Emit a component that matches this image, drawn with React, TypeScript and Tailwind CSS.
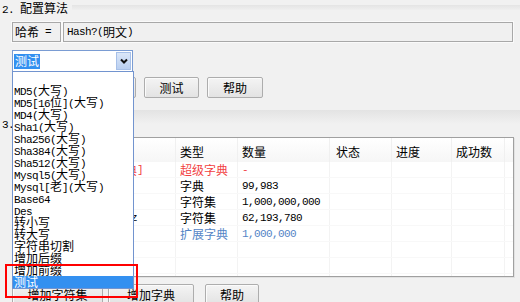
import React from 'react'

const LAT = "font-['Liberation_Mono',monospace] text-[11px] tracking-[-0.6px]"

function Mix({ t }: { t: string }) {
  const parts = t.match(/[\x00-\u02ff]+|[^\x00-\u02ff]+/g) ?? []
  return (
    <>
      {parts.map((p, i) =>
        /[\x00-\u02ff]/.test(p[0]) ? (
          <span key={i} className={LAT}>
            {p}
          </span>
        ) : (
          <span key={i}>{p}</span>
        )
      )}
    </>
  )
}

const Btn = ({ label, w }: { label: string; w: string }) => (
  <div
    className={`${w} h-[21px] shrink-0 flex items-center justify-center rounded-[2px] border border-[#adadad] bg-gradient-to-b from-[#f4f4f4] to-[#e3e3e3] shadow-[inset_1px_1px_0_#fbfbfb]`}
  >
    <Mix t={label} />
  </div>
)

const options = [
  '',
  'MD5(大写)',
  'MD5[16位](大写)',
  'MD4(大写)',
  'Sha1(大写)',
  'Sha256(大写)',
  'Sha384(大写)',
  'Sha512(大写)',
  'Mysql5(大写)',
  'Mysql[老](大写)',
  'Base64',
  'Des',
  '转小写',
  '转大写',
  '字符串切割',
  '增加后缀',
  '增加前缀',
  '测试',
]

const cols = [
  { w: 'w-[68px]', h: '', pl: 'pl-[4px]' },
  { w: 'w-[95px]', h: '', pl: 'pl-[2px]' },
  { w: 'w-[62px]', h: '类型', pl: 'pl-[4px]' },
  { w: 'w-[92px]', h: '数量', pl: 'pl-[4px]' },
  { w: 'w-[62px]', h: '状态', pl: 'pl-[6px]' },
  { w: 'w-[60px]', h: '进度', pl: 'pl-[4px]' },
  { w: 'w-[53px]', h: '成功数', pl: 'pl-[4px]' },
]

const rows = [
  { c: 'text-[#f23f3f]', v: ['1', '[超级字典]', '超级字典', '-'] },
  { c: 'text-black', v: ['2', '', '字典', '99,983'] },
  { c: 'text-black', v: ['3', '', '字符集', '1,000,000,000'] },
  { c: 'text-black', v: ['4', 'A-Z0-9a-z', '字符集', '62,193,780'] },
  { c: 'text-[#5585c6]', v: ['5', '', '扩展字典', '1,000,000'] },
]

export default function App() {
  return (
    <div className="relative w-[520px] h-[302px] overflow-hidden bg-[#f1f1f1] text-black text-[12px] leading-[12px] font-['Noto_Sans_CJK_SC',sans-serif]">
      {/* section 2 title */}
      <div className="flex h-[22px] items-start pt-[2px] pl-[2px]">
        <span className="whitespace-nowrap">
          <Mix t="2." />
          <span className="ml-[6px]">配置算法</span>
        </span>
        <div className="ml-[4px] mt-[3px] h-[5px] flex-1 bg-gradient-to-b from-[#e4e4e4] to-[#efefef]" />
      </div>

      {/* hash row */}
      <div className="flex h-[20px] pl-[12px]">
        <div className="w-[49px] h-[20px] flex items-center pl-[2px] border border-[#a8a8a8] bg-[#f0f0f0] shadow-[0_0_0_1px_#fafafa] whitespace-pre">
          <Mix t="哈希 =" />
        </div>
        <div className="ml-[2px] w-[450px] h-[20px] flex items-center pl-[3px] border border-[#a8a8a8] bg-[#f0f0f0] shadow-[0_0_0_1px_#fafafa]">
          <Mix t="Hash?(明文)" />
        </div>
      </div>

      {/* combobox */}
      <div className="mt-[8px] ml-[12px] w-[121px] h-[22px] flex items-center border border-[#7a9cd3] bg-white">
        <span className="ml-[1px] px-[1px] h-[15px] flex items-center bg-[#3390f0] text-white">测试</span>
        <div className="ml-auto mr-[1px] w-[15px] h-[18px] flex items-center justify-center bg-gradient-to-b from-[#dbe7f8] to-[#b9cff0] border border-[#a7c0e8]">
          <svg width="8" height="6" viewBox="0 0 8 6">
            <path d="M1 1.5 L4 4.5 L7 1.5" fill="none" stroke="#111" strokeWidth="2" />
          </svg>
        </div>
      </div>

      {/* buttons row */}
      <div className="mt-[5px] flex pl-[76px] gap-[8px]">
        <Btn label="选择" w="w-[60px]" />
        <Btn label="测试" w="w-[55px]" />
        <Btn label="帮助" w="w-[56px]" />
      </div>

      {/* section 3 header */}
      <div className="relative h-[39px]">
        <div className="absolute left-[12px] right-0 top-[12px] h-[14px] bg-gradient-to-b from-[#e3e3e3] to-[#f1f1f1]" />
        <div className="absolute left-[2px] top-[19px]">
          <Mix t="3." />
          <span className="ml-[6px]">字典列表</span>
        </div>
      </div>

      {/* table */}
      <div className="ml-[12px] w-[502px] h-[140px] border border-[#a0a0a0] bg-white shadow-[1px_1px_0_#e2e2e2] overflow-hidden">
        <div className="flex h-[24px] bg-gradient-to-b from-[#ffffff] to-[#f6f6f6]">
          {cols.map((c, i) => (
            <div key={i} className={`${c.w} ${c.pl} shrink-0 h-full flex items-center pt-[4px] border-r border-[#f0f0f0]`}>
              {c.h}
            </div>
          ))}
        </div>
        <div className="relative">
          {rows.map((r, ri) => (
            <div key={ri} className={`flex h-[16px] ${r.c} border-b border-[#f8f8f8]`}>
              {cols.map((c, i) => (
                <div key={i} className={`${c.w} ${c.pl} shrink-0 flex items-center whitespace-nowrap border-r border-[#f3f3f3]`}>
                  {r.v[i] ? <Mix t={r.v[i]} /> : null}
                </div>
              ))}
            </div>
          ))}
          {[0, 1, 2].map((k) => (
            <div key={k} className="flex h-[16px] border-b border-[#f8f8f8]">
              {cols.map((c, i) => (
                <div key={i} className={`${c.w} shrink-0 border-r border-[#f3f3f3]`} />
              ))}
            </div>
          ))}
        </div>
      </div>

      {/* bottom buttons */}
      <div className="mt-[7px] flex pl-[12px]">
        <Btn label="增加字符集" w="w-[91px]" />
        <div className="ml-[5px]">
          <Btn label="增加字典" w="w-[86px]" />
        </div>
        <div className="ml-[11px]">
          <Btn label="帮助" w="w-[54px]" />
        </div>
      </div>

      {/* open dropdown list */}
      <div className="absolute left-[12px] top-[71px] w-[122px] h-[218px] border border-[#7294cf] bg-white">
        {options.map((o, i) => (
          <div
            key={i}
            className={`h-[12px] pl-[1px] whitespace-nowrap leading-[12px] ${
              i === options.length - 1 ? 'bg-[#3390f0] text-white' : ''
            }`}
          >
            {o ? <Mix t={o} /> : null}
          </div>
        ))}
      </div>

      {/* red annotation */}
      <div className="absolute left-[5px] top-[264px] w-[133px] h-[34px] border-2 border-[#ff0000]" />
    </div>
  )
}
